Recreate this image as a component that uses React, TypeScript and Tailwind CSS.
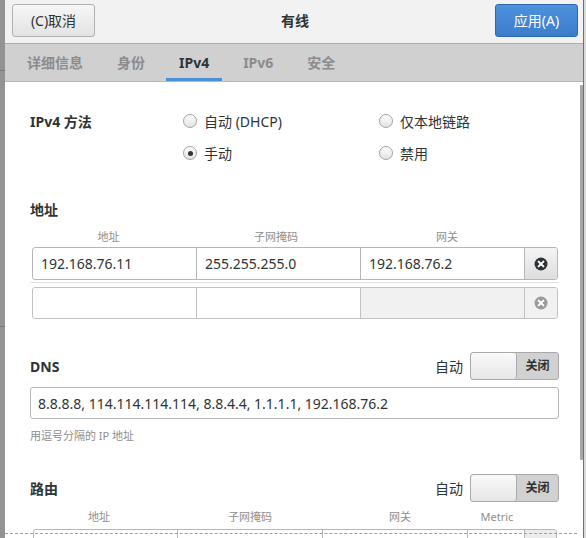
import React from "react";

function Radio({ checked, label }: { checked?: boolean; label: string }) {
  return (
    <div className="flex h-[20px] items-center gap-[7px]">
      <span className="flex h-[14px] w-[14px] items-center justify-center rounded-full border border-[#a3a3a3] bg-linear-to-b from-white to-[#e2e2e2]">
        {checked && <span className="h-[5px] w-[5px] rounded-full bg-[#2e3436]" />}
      </span>
      <span>{label}</span>
    </div>
  );
}

function ClearIcon({ color }: { color: string }) {
  return (
    <svg width="14" height="14" viewBox="0 0 14 14">
      <circle cx="7" cy="7" r="6.5" fill={color} />
      <path d="M4.6 4.6 L9.4 9.4 M9.4 4.6 L4.6 9.4" stroke="#fff" strokeWidth="2" strokeLinecap="round" />
    </svg>
  );
}

function Switch() {
  return (
    <div className="flex h-[28px] w-[89px] overflow-hidden rounded-[3px] border border-[#a9a9a9] bg-[#d1d1d1]">
      <div className="w-[46px] rounded-[3px] border-r border-[#a9a9a9] bg-linear-to-b from-[#fafafa] to-[#e6e6e6]" />
      <div className="flex flex-1 items-center justify-center text-[12px] font-bold text-[#2e3436]">关闭</div>
    </div>
  );
}

export default function App() {
  return (
    <div className="flex h-[538px] w-[586px] overflow-hidden bg-white font-['Noto_Sans','Noto_Sans_CJK_SC',sans-serif] text-[14px] text-[#2e3436]">
      {/* background window edge */}
      <div className="flex w-[5px] flex-col bg-[#939393]">
        <div className="h-[70px]" />
        <div className="h-px bg-[#7a7a7a]" />
        <div className="h-[255px]" />
        <div className="h-px bg-[#7a7a7a]" />
      </div>

      <div className="flex w-[578px] flex-col">
        {/* header */}
        <div className="flex h-[44px] items-start justify-between border-b border-[#adadad] bg-[#f2f2f2] pl-[7px] pr-[5px] pt-[4px]">
          <button className="flex h-[33px] w-[83px] items-center justify-center rounded-[3px] border border-[#b1b1b1] bg-linear-to-b from-[#f6f6f6] to-[#e3e3e3]">
            (C)取消
          </button>
          <div className="flex h-[33px] flex-1 items-center justify-center font-bold">有线</div>
          <button className="flex h-[33px] w-[83px] items-center justify-center rounded-[3px] border border-[#2d67ad] bg-linear-to-b from-[#4d92dd] to-[#3b7dc8] text-white">
            应用(A)
          </button>
        </div>

        {/* tabs */}
        <div className="flex h-[38px] gap-[8px] border-b border-[#b7b7b7] bg-[#d0d0d0] pl-[9px] font-bold text-[#8c8c8c]">
          <div className="flex items-center px-[13px]">详细信息</div>
          <div className="flex items-center px-[13px]">身份</div>
          <div className="flex items-center border-b-[3px] border-[#4a90d9] px-[13px] pt-[3px] text-[#2e3436]">IPv4</div>
          <div className="flex items-center px-[13px]">IPv6</div>
          <div className="flex items-center px-[13px]">安全</div>
        </div>

        {/* content */}
        <div className="relative flex-1 overflow-hidden pl-[25px] pr-[24px]">
          <div className="mt-[29px] flex">
            <div className="flex h-[20px] w-[153px] items-center font-bold">IPv4 方法</div>
            <div className="flex w-[196px] flex-col gap-[12px]">
              <Radio label="自动 (DHCP)" />
              <Radio checked label="手动" />
            </div>
            <div className="flex flex-col gap-[12px]">
              <Radio label="仅本地链路" />
              <Radio label="禁用" />
            </div>
          </div>

          <div className="mt-[36px] flex h-[20px] items-center font-bold">地址</div>
          <div className="ml-[2px] mt-[11px] flex h-[14px] items-center text-[11px] text-[#8e8e8e]">
            <div className="w-[153px] text-center">地址</div>
            <div className="w-[182px] text-center">子网掩码</div>
            <div className="w-[160px] text-center">网关</div>
          </div>
          <div className="ml-[2px] mt-[3px] flex h-[33px] w-[526px] overflow-hidden rounded-[3px] border border-[#b6b6b6]">
            <div className="flex w-[164px] items-center border-r border-[#b6b6b6] pl-[8px]">192.168.76.11</div>
            <div className="flex w-[164px] items-center border-r border-[#b6b6b6] pl-[8px]">255.255.255.0</div>
            <div className="flex w-[164px] items-center border-r border-[#b6b6b6] pl-[8px]">192.168.76.2</div>
            <div className="flex flex-1 items-center justify-center bg-linear-to-b from-[#f4f4f4] to-[#dedede]">
              <ClearIcon color="#2e3436" />
            </div>
          </div>
          <div className="mt-[2px] h-px w-[529px] bg-[#e2e2e2]" />
          <div className="ml-[2px] mt-[4px] flex h-[32px] w-[526px] overflow-hidden rounded-[3px] border border-[#c2c2c2]">
            <div className="w-[164px] border-r border-[#c2c2c2]" />
            <div className="w-[164px] border-r border-[#c2c2c2]" />
            <div className="w-[164px] border-r border-[#c2c2c2] bg-[#f1f1f1]" />
            <div className="flex flex-1 items-center justify-center bg-[#f1f1f1]">
              <ClearIcon color="#9b9b9b" />
            </div>
          </div>

          <div className="mt-[33px] flex h-[28px] items-center justify-between">
            <div className="font-bold">DNS</div>
            <div className="flex items-center gap-[7px]">
              <span>自动</span>
              <Switch />
            </div>
          </div>
          <div className="mt-[7px] flex h-[32px] items-center rounded-[3px] border border-[#b6b6b6] pl-[7px]">
            8.8.8.8, 114.114.114.114, 8.8.4.4, 1.1.1.1, 192.168.76.2
          </div>
          <div className="mt-[10px] h-[14px] text-[11px] leading-[14px] text-[#8e8e8e]">用逗号分隔的 IP 地址</div>

          <div className="mt-[31px] flex h-[28px] items-center justify-between">
            <div className="font-bold">路由</div>
            <div className="flex items-center gap-[7px]">
              <span>自动</span>
              <Switch />
            </div>
          </div>
          <div className="ml-[3px] mt-[8px] flex h-[14px] items-center text-[11px] text-[#8e8e8e]">
            <div className="w-[132px] text-center">地址</div>
            <div className="w-[170px] text-center">子网掩码</div>
            <div className="w-[130px] text-center">网关</div>
            <div className="w-[64px] text-center">Metric</div>
          </div>
          <div className="ml-[3px] mt-[5px] flex h-[32px] w-[524px] overflow-hidden rounded-[3px] border border-[#b6b6b6]">
            <div className="w-[144px] border-r border-[#b6b6b6]" />
            <div className="w-[145px] border-r border-[#b6b6b6]" />
            <div className="w-[145px] border-r border-[#b6b6b6]" />
            <div className="w-[57px] border-r border-[#b6b6b6]" />
            <div className="flex-1 bg-[#ececec]" />
          </div>

          {/* scrollbar + clipped edge */}
          <div className="absolute right-0 top-[3px] h-[375px] w-[3px] rounded-[1px] bg-[#a6a6a6]" />
          <div className="absolute bottom-[4px] left-0 right-[6px] border-t border-dashed border-[#a0a0a0]" />
        </div>
      </div>

      <div className="w-px bg-[#6f6f6f]" />
      <div className="w-[2px] bg-[#dadada]" />
    </div>
  );
}
